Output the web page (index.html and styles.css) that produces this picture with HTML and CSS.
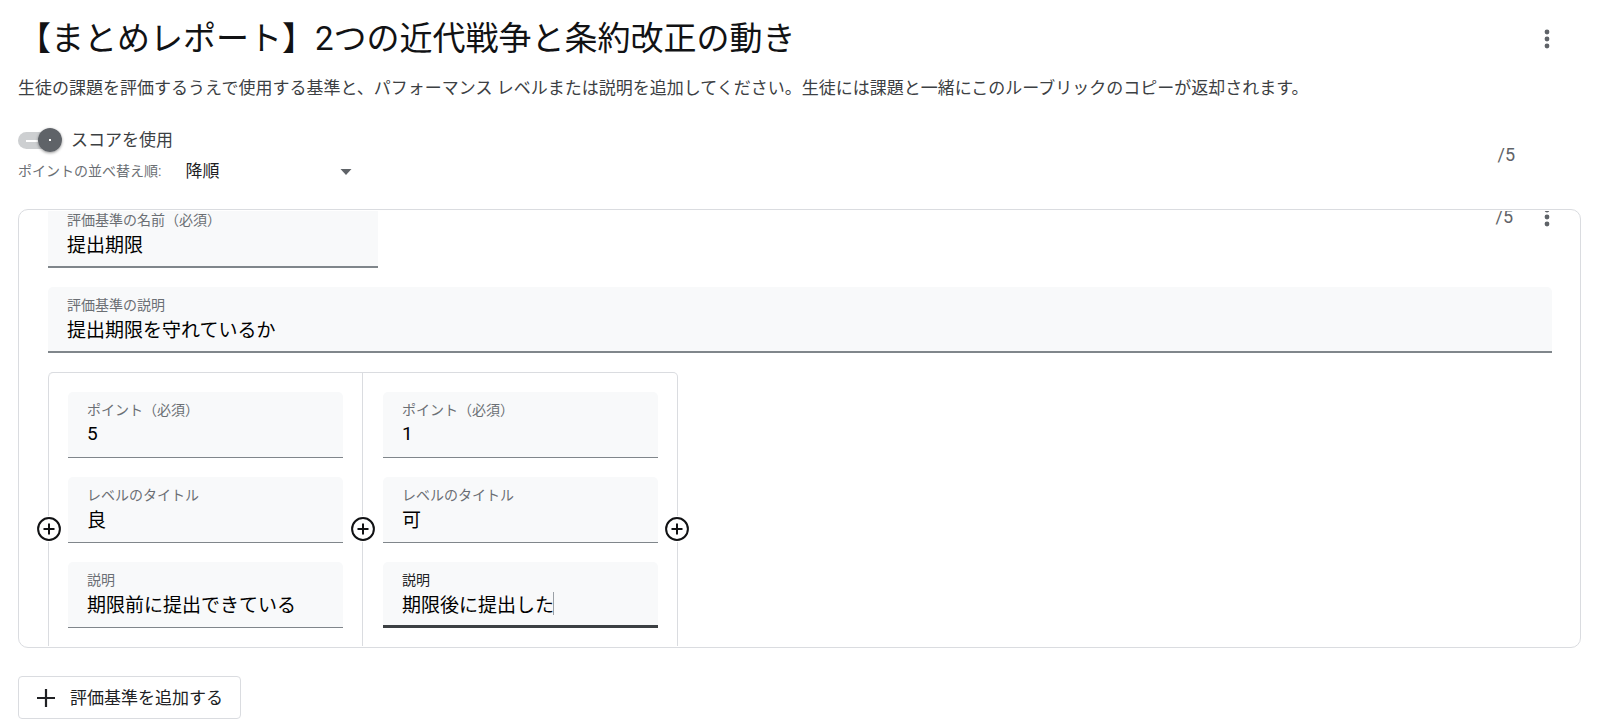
FILE: index.html
```
<!DOCTYPE html>
<html lang="ja">
<head>
<meta charset="utf-8">
<meta name="viewport" content="width=device-width, initial-scale=1">
<title>ルーブリック</title>
<link rel="stylesheet" href="styles.css">
</head>
<body>
<main class="page">
  <header class="header">
    <h1 class="title">【まとめレポート】2つの近代戦争と条約改正の動き</h1>
    <button class="icon-button" type="button" aria-label="その他のオプション">
      <svg width="24" height="24" viewBox="0 0 24 24" fill="currentColor"><circle cx="12" cy="5" r="2.4"/><circle cx="12" cy="12" r="2.4"/><circle cx="12" cy="19" r="2.4"/></svg>
    </button>
  </header>
  <p class="description">生徒の課題を評価するうえで使用する基準と、パフォーマンス レベルまたは説明を追加してください。生徒には課題と一緒にこのルーブリックのコピーが返却されます。</p>

  <section class="settings">
    <div class="options">
      <div class="option">
        <input class="switch" type="checkbox" id="use-score" checked>
        <label class="switch-label" for="use-score">スコアを使用</label>
      </div>
      <div class="option">
        <label class="sort-label" for="sort">ポイントの並べ替え順:</label>
        <div class="select-box">
          <select class="select" id="sort"><option>降順</option><option>昇順</option></select>
          <svg class="select-arrow" width="12" height="6" viewBox="0 0 12 6"><path d="M0.500 0h11L6 6z" fill="currentColor"/></svg>
        </div>
      </div>
    </div>
    <span class="total">/5</span>
  </section>

  <section class="card">
    <div class="scroller">
      <div class="criterion">
        <div class="criterion-head">
          <div class="field field-name">
            <label class="field-label" for="c-name">評価基準の名前（必須）</label>
            <input class="field-input" id="c-name" type="text" value="提出期限">
          </div>
          <div class="criterion-side">
            <span class="points">/5</span>
            <button class="icon-button" type="button" aria-label="評価基準のオプション">
              <svg width="24" height="24" viewBox="0 0 24 24" fill="currentColor"><circle cx="12" cy="5" r="2.4"/><circle cx="12" cy="12" r="2.4"/><circle cx="12" cy="19" r="2.4"/></svg>
            </button>
          </div>
        </div>
        <div class="field">
          <label class="field-label" for="c-desc">評価基準の説明</label>
          <input class="field-input" id="c-desc" type="text" value="提出期限を守れているか">
        </div>
        <div class="levels">
          <div class="level">
            <button class="add-level" type="button" aria-label="レベルを追加"><svg width="26" height="26" viewBox="0 0 26 26"><circle cx="13" cy="13" r="10.9"/><path d="M13 7.5v11M7.5 13h11"/></svg></button>
            <div class="field field-thin">
              <label class="field-label" for="p1">ポイント（必須）</label>
              <input class="field-input" id="p1" type="text" value="5">
            </div>
            <div class="field field-thin">
              <label class="field-label" for="t1">レベルのタイトル</label>
              <input class="field-input" id="t1" type="text" value="良">
            </div>
            <div class="field field-thin">
              <label class="field-label" for="d1">説明</label>
              <input class="field-input" id="d1" type="text" value="期限前に提出できている">
            </div>
          </div>
          <div class="level">
            <button class="add-level" type="button" aria-label="レベルを追加"><svg width="26" height="26" viewBox="0 0 26 26"><circle cx="13" cy="13" r="10.9"/><path d="M13 7.5v11M7.5 13h11"/></svg></button>
            <div class="field field-thin">
              <label class="field-label" for="p2">ポイント（必須）</label>
              <input class="field-input" id="p2" type="text" value="1">
            </div>
            <div class="field field-thin">
              <label class="field-label" for="t2">レベルのタイトル</label>
              <input class="field-input" id="t2" type="text" value="可">
            </div>
            <div class="field field-active">
              <label class="field-label" for="d2">説明</label>
              <input class="field-input" id="d2" type="text" value="期限後に提出した">
              <span class="caret"></span>
            </div>
            <button class="add-level add-level-end" type="button" aria-label="レベルを追加"><svg width="26" height="26" viewBox="0 0 26 26"><circle cx="13" cy="13" r="10.9"/><path d="M13 7.5v11M7.5 13h11"/></svg></button>
          </div>
        </div>
      </div>
    </div>
  </section>

  <button class="add-criterion" type="button">
    <svg width="20" height="20" viewBox="0 0 20 20"><path d="M10 1v18M1 10h18" stroke="currentColor" stroke-width="2.2"/></svg>
    <span>評価基準を追加する</span>
  </button>
</main>
</body>
</html>
```
FILE: styles.css
```
* {
  box-sizing: border-box;
}

body {
  margin: 0;
  background: #fff;
  color: #3c4043;
  font-family: Roboto, "Noto Sans CJK JP", sans-serif;
  font-size: 17px;
  font-weight: 400;
  line-height: 24px;
}

button,
input,
select {
  margin: 0;
  padding: 0;
  border: 0;
  background: none;
  color: inherit;
  font: inherit;
  outline: none;
}

svg {
  display: block;
}

.page {
  display: flex;
  flex-direction: column;
  height: 100vh;
  padding: 19px 19px 9px 18px;
}

.header {
  display: flex;
  align-items: center;
  justify-content: space-between;
  padding-right: 22px;
}

.title {
  margin: 0;
  color: #111214;
  font-size: 33px;
  font-weight: 400;
  line-height: 40px;
}

.icon-button {
  color: #5f6368;
}

.description {
  margin: 17px 0 27px;
}

.settings {
  display: flex;
  align-items: center;
  justify-content: space-between;
  padding-right: 66px;
}

.options {
  display: flex;
  flex-direction: column;
  gap: 6px;
}

.option {
  display: flex;
  align-items: center;
}

.switch {
  position: relative;
  width: 44px;
  height: 26px;
  appearance: none;
}

.switch::before {
  content: "";
  position: absolute;
  inset: 5px 2px 4px 0;
  border-radius: 9px;
  background: linear-gradient(#fff, #fff) 8px 8px / 12px 2px no-repeat #cdcfd1;
}

.switch::after {
  content: "";
  position: absolute;
  top: 1px;
  right: 0;
  width: 24px;
  height: 24px;
  border-radius: 50%;
  background: radial-gradient(circle, #fff 0 1px, #5f6368 1px);
  box-shadow: 0 1px 3px rgba(0, 0, 0, 0.4);
}

.switch-label {
  margin-left: 9px;
}

.sort-label {
  color: #6b6f74;
  font-size: 14px;
}

.select-box {
  display: flex;
  align-items: center;
  position: relative;
  width: 168px;
  margin-left: 24px;
}

.select {
  width: 100%;
  height: 24px;
  appearance: none;
  color: #202124;
}

.select-arrow {
  position: absolute;
  right: 1px;
  top: 10px;
  color: #5f6368;
  pointer-events: none;
}

.total,
.points {
  color: #5f6368;
  font-size: 18px;
}

.card {
  flex: 1;
  min-height: 0;
  margin: 26px 0 28px;
  padding: 1px 0;
  border: 1px solid #dadce0;
  border-radius: 10px;
}

.scroller {
  height: 100%;
  overflow: hidden;
}

/* Criterion content sits slightly scrolled inside the card. */
.criterion {
  display: flex;
  flex-direction: column;
  gap: 19px;
  margin-top: -9px;
  padding: 0 28px 0 29px;
}

.criterion-head {
  display: flex;
  justify-content: space-between;
}

.criterion-side {
  display: flex;
  gap: 22px;
  height: 30px;
  margin-right: -7px;
  align-items: center;
}

.field {
  display: flex;
  flex-direction: column;
  position: relative;
  height: 66px;
  padding: 8px 19px 0;
  border-bottom: 2px solid #80868b;
  border-radius: 5px 5px 0 0;
  background: #f8f9fa;
}

.field-name {
  width: 330px;
}

.field-thin {
  border-bottom: 1px solid #80868b;
}

.field-active {
  border-bottom: 3px solid #3c4043;
}

.field-label {
  color: #6b6f74;
  font-size: 14px;
  line-height: 20px;
}

.field-active .field-label {
  color: #202124;
}

.field-input {
  width: 100%;
  height: 26px;
  color: #000;
  font-size: 19px;
}

.caret {
  position: absolute;
  top: 30px;
  left: 170px;
  width: 1px;
  height: 23px;
  background: #9aa0a6;
}

.levels {
  display: flex;
  align-self: flex-start;
  border: 1px solid #dadce0;
  border-left: 0;
  border-radius: 5px 5px 0 0;
}

.level {
  display: flex;
  flex-direction: column;
  gap: 19px;
  position: relative;
  width: 314px;
  padding: 19px 19px 40px;
  border-left: 1px solid #dadce0;
}

.level + .level {
  width: 315px;
  padding-left: 20px;
}

.level:first-child {
  border-top-left-radius: 5px;
}

.add-level {
  position: absolute;
  top: 143px;
  left: -13px;
  z-index: 1;
  border-radius: 50%;
  background: #fff;
}

.add-level-end {
  right: -13px;
  left: auto;
}

.add-level svg {
  fill: none;
  stroke: #111214;
  stroke-width: 2;
}

.add-criterion {
  display: flex;
  align-items: center;
  align-self: flex-start;
  gap: 14px;
  height: 43px;
  padding: 0 17px;
  border: 1px solid #dadce0;
  border-radius: 4px;
  color: #202124;
}
```
